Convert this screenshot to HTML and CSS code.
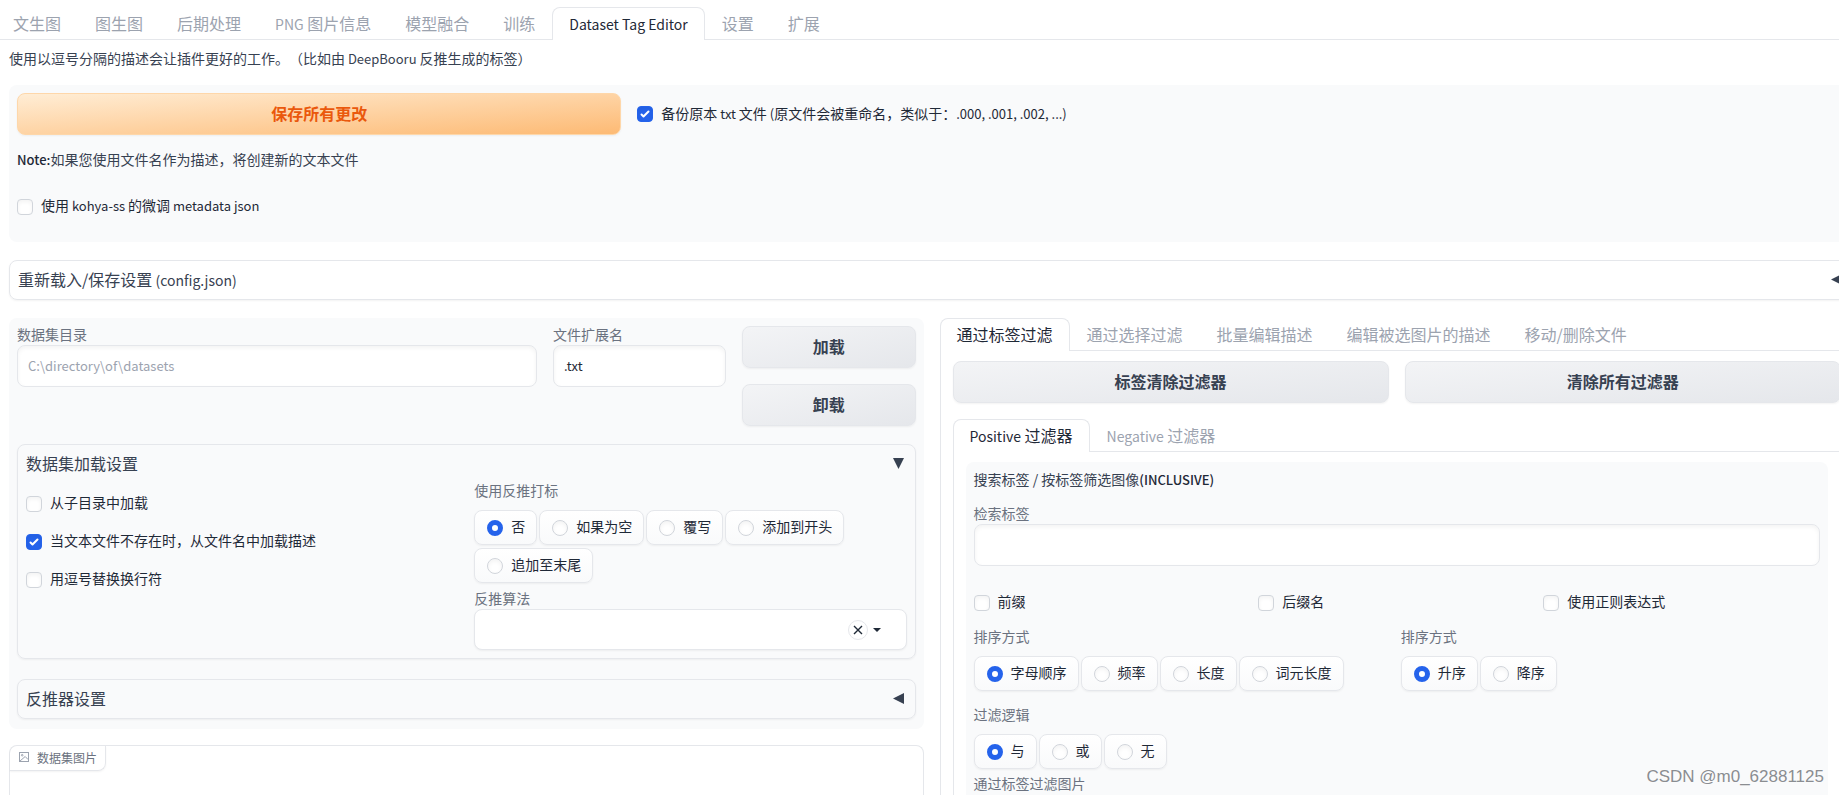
FILE: index.html
```html
<!DOCTYPE html>
<html lang="zh-CN">
<head>
<meta charset="utf-8">
<title>Dataset Tag Editor</title>
<link rel="stylesheet" href="styles.css">
</head>
<body>
<nav class="tabs tabs-main">
  <button class="tab">文生图</button>
  <button class="tab">图生图</button>
  <button class="tab">后期处理</button>
  <button class="tab"><span class="latin">PNG</span> 图片信息</button>
  <button class="tab">模型融合</button>
  <button class="tab">训练</button>
  <button class="tab active"><span class="latin">Dataset Tag Editor</span></button>
  <button class="tab">设置</button>
  <button class="tab">扩展</button>
</nav>
<main class="page">
  <p class="intro">使用以逗号分隔的描述会让插件更好的工作。（比如由<span class="latin"> DeepBooru </span>反推生成的标签）</p>

  <section class="panel save-panel">
    <div class="save-row">
      <button class="btn primary">保存所有更改</button>
      <label class="check"><input type="checkbox" checked><span>备份原本<span class="latin"> txt </span>文件<span class="latin"> (</span>原文件会被重命名，类似于：<span class="latin">.000, .001, .002, ...)</span></span></label>
    </div>
    <p class="note"><strong class="latin">Note:</strong>如果您使用文件名作为描述，将创建新的文本文件</p>
    <label class="check"><input type="checkbox"><span>使用<span class="latin"> kohya-ss </span>的微调<span class="latin"> metadata json</span></span></label>
  </section>

  <section class="accordion config">
    <button class="accordion-title"><span>重新载入/保存设置<span class="latin"> (config.json)</span></span><svg class="arrow" viewBox="0 0 12 12"><path d="M0 6 12 0v12z"/></svg></button>
  </section>

  <div class="columns">
    <div class="left">
      <section class="panel dataset">
        <div class="load-row">
          <div class="field wide">
            <label class="label" for="dir">数据集目录</label>
            <input class="text" id="dir" type="text" placeholder="C:\directory\of\datasets">
          </div>
          <div class="field">
            <label class="label" for="ext">文件扩展名</label>
            <input class="text" id="ext" type="text" value=".txt">
          </div>
          <div class="load-buttons">
            <button class="btn">加载</button>
            <button class="btn">卸载</button>
          </div>
        </div>
        <section class="accordion">
          <button class="accordion-title"><span>数据集加载设置</span><svg class="arrow" viewBox="0 0 12 12"><path d="M0 0h12L6 12z"/></svg></button>
          <div class="load-settings">
            <div class="check-list">
              <label class="check"><input type="checkbox"><span>从子目录中加载</span></label>
              <label class="check"><input type="checkbox" checked><span>当文本文件不存在时，从文件名中加载描述</span></label>
              <label class="check"><input type="checkbox"><span>用逗号替换换行符</span></label>
            </div>
            <div class="interrogate">
              <fieldset class="group">
                <legend class="label">使用反推打标</legend>
                <div class="radios">
                  <label class="radio"><input type="radio" name="use" checked><span>否</span></label>
                  <label class="radio"><input type="radio" name="use"><span>如果为空</span></label>
                  <label class="radio"><input type="radio" name="use"><span>覆写</span></label>
                  <label class="radio"><input type="radio" name="use"><span>添加到开头</span></label>
                  <label class="radio"><input type="radio" name="use"><span>追加至末尾</span></label>
                </div>
              </fieldset>
              <div class="field">
                <label class="label" for="algo">反推算法</label>
                <div class="dropdown">
                  <select id="algo"><option></option></select>
                  <div class="dropdown-tools">
                    <button class="clear" aria-label="清除"><svg viewBox="0 0 10 10"><path d="M1 1 9 9M9 1 1 9"/></svg></button>
                    <svg class="caret" viewBox="0 0 8 4"><path d="M0 0h8L4 4z"/></svg>
                  </div>
                </div>
              </div>
            </div>
          </div>
        </section>
        <section class="accordion">
          <button class="accordion-title"><span>反推器设置</span><svg class="arrow" viewBox="0 0 12 12"><path d="M0 6 12 0v12z"/></svg></button>
        </section>
      </section>
      <section class="gallery">
        <h2 class="gallery-label"><svg viewBox="0 0 10 10"><rect x=".5" y=".5" width="9" height="9"/><circle cx="3.2" cy="3.2" r=".8"/><path d="M1 9 6.200 4.500 9 7.500"/></svg><span>数据集图片</span></h2>
      </section>
    </div>

    <div class="right">
      <nav class="tabs">
        <button class="tab active">通过标签过滤</button>
        <button class="tab">通过选择过滤</button>
        <button class="tab">批量编辑描述</button>
        <button class="tab">编辑被选图片的描述</button>
        <button class="tab">移动/删除文件</button>
      </nav>
      <div class="tab-body">
        <div class="clear-row">
          <button class="btn">标签清除过滤器</button>
          <button class="btn">清除所有过滤器</button>
        </div>
        <nav class="tabs">
          <button class="tab active"><span class="latin">Positive</span> 过滤器</button>
          <button class="tab"><span class="latin">Negative</span> 过滤器</button>
        </nav>
        <div class="tab-body">
          <section class="panel filter">
            <p class="heading">搜索标签 / 按标签筛选图像<strong class="latin">(INCLUSIVE)</strong></p>
            <div class="field">
              <label class="label" for="search">检索标签</label>
              <input class="text" id="search" type="text">
            </div>
            <div class="filter-checks">
              <label class="check"><input type="checkbox"><span>前缀</span></label>
              <label class="check"><input type="checkbox"><span>后缀名</span></label>
              <label class="check"><input type="checkbox"><span>使用正则表达式</span></label>
            </div>
            <div class="sort-row">
              <fieldset class="group">
                <legend class="label">排序方式</legend>
                <div class="radios">
                  <label class="radio"><input type="radio" name="sort" checked><span>字母顺序</span></label>
                  <label class="radio"><input type="radio" name="sort"><span>频率</span></label>
                  <label class="radio"><input type="radio" name="sort"><span>长度</span></label>
                  <label class="radio"><input type="radio" name="sort"><span>词元长度</span></label>
                </div>
              </fieldset>
              <fieldset class="group">
                <legend class="label">排序方式</legend>
                <div class="radios">
                  <label class="radio"><input type="radio" name="order" checked><span>升序</span></label>
                  <label class="radio"><input type="radio" name="order"><span>降序</span></label>
                </div>
              </fieldset>
            </div>
            <fieldset class="group logic">
              <legend class="label">过滤逻辑</legend>
              <div class="radios">
                <label class="radio"><input type="radio" name="logic" checked><span>与</span></label>
                <label class="radio"><input type="radio" name="logic"><span>或</span></label>
                <label class="radio"><input type="radio" name="logic"><span>无</span></label>
              </div>
            </fieldset>
            <p class="label">通过标签过滤图片</p>
          </section>
        </div>
      </div>
    </div>
  </div>
</main>
<div class="watermark">CSDN @m0_62881125</div>
</body>
</html>
```

FILE: styles.css
```css
:root {
  --line: #e5e7eb;
  --soft: #f9fafb;
  --text: #1f2937;
  --body: #374151;
  --muted: #6b7280;
  --faint: #9ca3af;
  --blue: #2563eb;
  --shadow: 0 1px 2px rgba(0, 0, 0, .05);
}

* { box-sizing: border-box; }

body {
  display: flex;
  flex-direction: column;
  height: 100vh;
  margin: 0;
  overflow: hidden;
  background: #fff;
  color: var(--text);
  font: 14px/19px "Noto Sans CJK SC", sans-serif;
  text-spacing-trim: space-all;
}

p, h2 { margin: 0; }
button, input, select { font: inherit; color: inherit; }
button { cursor: pointer; }
strong { font-weight: 500; color: var(--text); }

/* Latin letters run large beside the Chinese ones */
.latin { font-size: 13px; line-height: 1; }
.tab .latin, .accordion-title .latin { font-size: 14px; }

/* tabs */
.tabs {
  display: flex;
  flex-shrink: 0;
  background: linear-gradient(var(--line), var(--line)) bottom / 100% 1px no-repeat;
}
.tabs-main { padding-top: 7px; }
.tab {
  height: 33px;
  padding: 0 16px 2px;
  border: 1px solid transparent;
  border-bottom: 0;
  background: none;
  color: var(--faint);
  font-size: 16px;
  line-height: 24px;
  white-space: nowrap;
}
.tabs-main .tab:first-child { padding-left: 12px; }
.tab.active {
  border-color: var(--line);
  border-radius: 8px 8px 0 0;
  background: #fff;
  color: var(--text);
}
.tab-body {
  flex: 1;
  display: flex;
  flex-direction: column;
  padding: 10px 12px 0;
  border: 1px solid var(--line);
  border-width: 0 1px;
}

/* the content is slightly wider than the window */
.page {
  flex: 1;
  display: flex;
  flex-direction: column;
  margin: 9px -15px 0 9px;
}
.intro { margin-bottom: 17px; color: var(--body); }

.panel {
  padding: 8px;
  border-radius: 8px;
  background: var(--soft);
}
.save-panel { margin-bottom: 18px; padding-bottom: 26px; }
.save-row {
  display: grid;
  grid-template-columns: 1fr 2fr;
  gap: 16px;
}
.note { margin: 15px 0 28px; color: var(--body); }

.btn {
  height: 42px;
  padding: 0 8px 2px;
  border: 1px solid var(--line);
  border-radius: 8px;
  background: linear-gradient(to bottom right, #f3f4f6, #e5e7eb);
  box-shadow: var(--shadow);
  color: var(--body);
  font-size: 16px;
  font-weight: 600;
}
.btn.primary {
  border-color: #fed7aa;
  background: linear-gradient(to bottom right, #ffedd5, #fdba74);
  color: #ea580c;
}

.accordion {
  padding: 7px 8px;
  border: 1px solid var(--line);
  border-radius: 8px;
  box-shadow: var(--shadow);
}
.config { margin-bottom: 18px; }
.accordion-title {
  display: flex;
  align-items: center;
  justify-content: space-between;
  width: 100%;
  height: 24px;
  padding: 0 3px 2px 0;
  border: 0;
  background: none;
  color: var(--body);
  font-size: 16px;
}
.arrow { width: 11px; height: 11px; fill: var(--body); }

/* controls */
.label { display: block; padding: 0 0 2px; color: var(--muted); line-height: 17px; }
.field { display: flex; flex-direction: column; min-width: 0; }
.text {
  width: 100%;
  height: 42px;
  padding: 0 10px 2px;
  border: 1px solid var(--line);
  border-radius: 8px;
  background: #fff;
  box-shadow: inset 0 2px 4px rgba(0, 0, 0, .05);
}
#dir, #ext { font-size: 13px; }
.text::placeholder { color: var(--faint); }

.check { display: flex; align-items: center; gap: 8px; }
.check > span, .radio > span { padding-bottom: 2px; line-height: 17px; }
.check input, .radio input {
  appearance: none;
  flex: none;
  width: 16px;
  height: 16px;
  margin: 0;
  border: 1px solid #d1d5db;
  background: #fff;
  box-shadow: inset 0 2px 4px rgba(0, 0, 0, .05);
}
.check input { border-radius: 4px; }
.radio input { border-radius: 50%; }
.check input:checked {
  border-color: var(--blue);
  background: var(--blue) url("data:image/svg+xml,%3Csvg viewBox='0 0 16 16' fill='white' xmlns='http://www.w3.org/2000/svg'%3E%3Cpath d='M12.207 4.793a1 1 0 010 1.414l-5 5a1 1 0 01-1.414 0l-2-2a1 1 0 011.414-1.414L6.500 9.086l4.293-4.293a1 1 0 011.414 0z'/%3E%3C/svg%3E") center / 16px;
}
.radio input:checked { border: 5px solid var(--blue); box-shadow: none; }

.group { min-width: 0; margin: 0; padding: 0; border: 0; }
.group .label { margin-bottom: 9px; }
.radios { display: flex; flex-wrap: wrap; gap: 3px 2px; }
.radio {
  display: flex;
  align-items: center;
  gap: 8px;
  height: 35px;
  padding: 0 11px 0 12px;
  border: 1px solid var(--line);
  border-radius: 8px;
  background: linear-gradient(#fff, var(--soft));
  box-shadow: var(--shadow);
}

.dropdown { display: grid; align-items: center; }
.dropdown > * { grid-area: 1 / 1; }
.dropdown select {
  appearance: none;
  width: 100%;
  height: 41px;
  border: 1px solid var(--line);
  border-radius: 8px;
  background: #fff;
  box-shadow: var(--shadow);
}
.dropdown-tools {
  display: flex;
  align-items: center;
  justify-self: end;
  gap: 5px;
  margin-right: 26px;
}
.clear {
  display: grid;
  place-items: center;
  width: 20px;
  height: 20px;
  padding: 0;
  border: 1px solid var(--line);
  border-radius: 50%;
  background: #fff;
}
.clear svg { width: 10px; height: 10px; stroke: var(--text); stroke-width: 1.4; }
.caret { width: 8px; height: 4px; fill: var(--text); }

/* columns */
.columns {
  flex: 1;
  display: grid;
  grid-template-columns: minmax(0, 1fr) minmax(0, 1fr);
  gap: 16px;
}
.left, .right { display: flex; flex-direction: column; }

.dataset { padding-bottom: 10px; }
.dataset .accordion { margin-top: 18px; }
.dataset .accordion + .accordion { margin-top: 20px; }
.load-row {
  display: grid;
  grid-template-columns: 3fr 1fr 1fr;
  gap: 16px;
}
.load-buttons { display: flex; flex-direction: column; gap: 16px; }
.load-settings {
  display: grid;
  grid-template-columns: 1fr 1fr;
  gap: 16px;
  padding: 6px 0 1px;
}
.check-list { display: flex; flex-direction: column; gap: 19px; padding-top: 12px; }
.interrogate { display: flex; flex-direction: column; gap: 7px; }

.gallery {
  flex: 1;
  margin-top: 16px;
  border: 1px solid var(--line);
  border-bottom: 0;
  border-radius: 8px 8px 0 0;
}
.gallery-label {
  display: inline-flex;
  align-items: center;
  gap: 8px;
  height: 25px;
  padding: 0 8px 2px 9px;
  border: 1px solid var(--line);
  border-width: 0 1px 1px 0;
  border-radius: 8px 0;
  box-shadow: var(--shadow);
  color: var(--muted);
  font-size: 12px;
  font-weight: 400;
}
.gallery-label svg { width: 10px; height: 10px; fill: none; stroke: var(--faint); }

.clear-row {
  display: grid;
  grid-template-columns: 1fr 1fr;
  gap: 16px;
  margin-bottom: 16px;
}
.filter { flex: 1; border-radius: 8px 8px 0 0; }
.heading { margin-bottom: 16px; color: var(--body); }
.filter-checks {
  display: grid;
  grid-template-columns: repeat(3, 1fr);
  gap: 8px;
  margin: 27px 0 16px;
}
.sort-row {
  display: grid;
  grid-template-columns: 1fr 1fr;
  gap: 8px;
}
.logic { margin: 15px 0 6px; }

.watermark {
  position: absolute;
  right: 15px;
  bottom: 7px;
  color: #8a8d91;
  font: 17px/22px "Liberation Sans", sans-serif;
  text-shadow: 0 0 2px #fff;
}
```
